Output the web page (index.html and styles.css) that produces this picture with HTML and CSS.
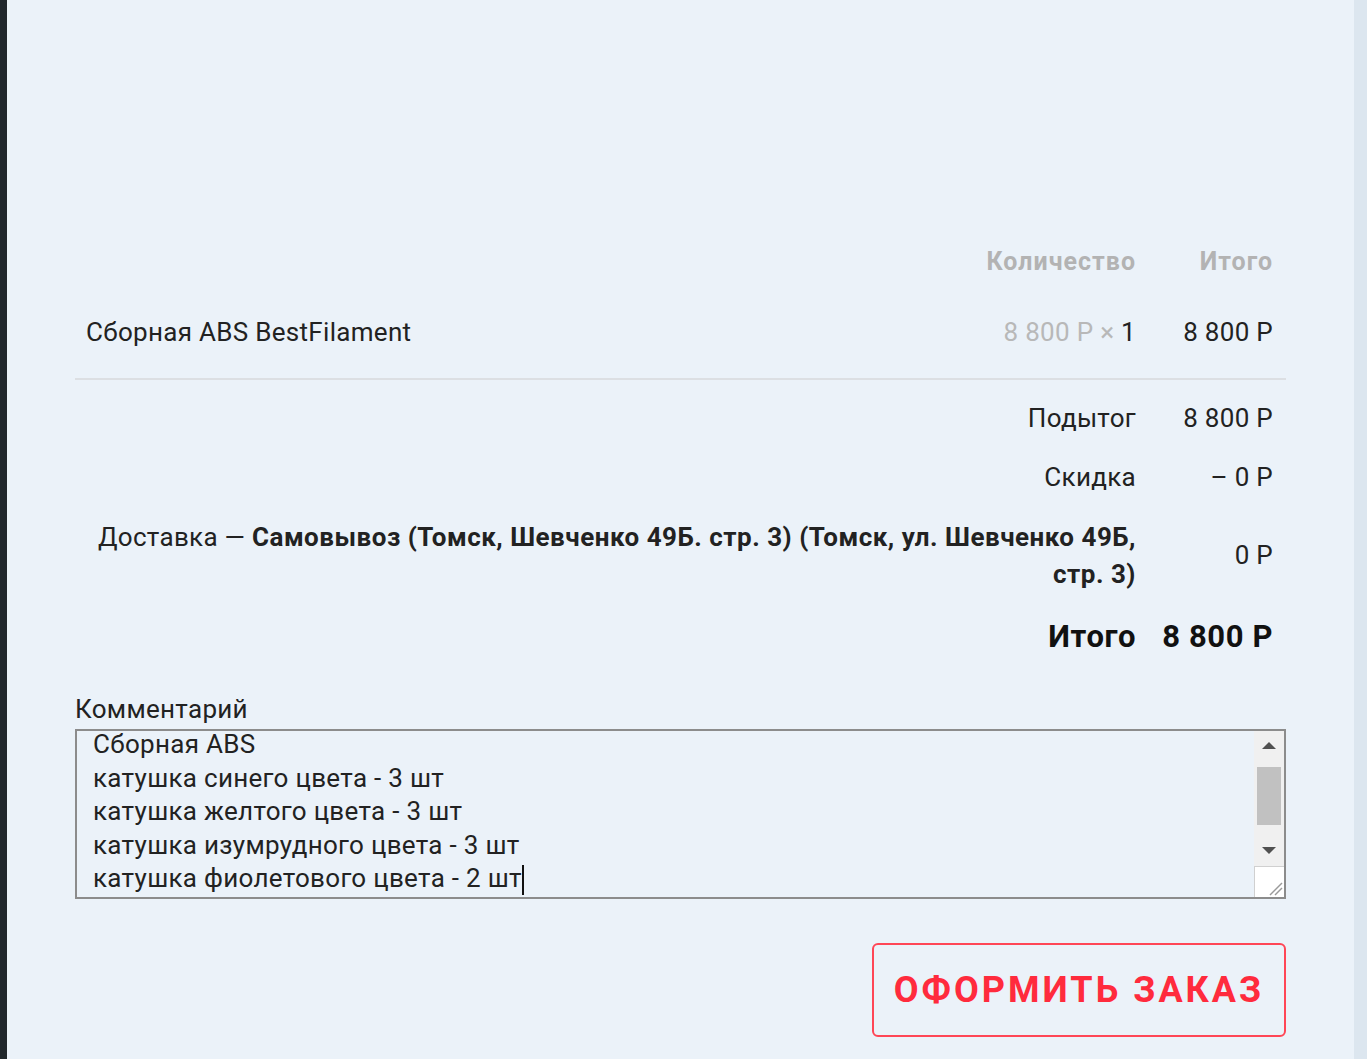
FILE: index.html
```html
<!DOCTYPE html>
<html lang="ru">
<head>
    <meta charset="UTF-8">
    <title>Корзина</title>
    <link rel="stylesheet" href="styles.css">
</head>
<body>
    <div class="pagina">
        <div class="rand-links"></div>

        <div class="inhoud">
            <table class="bestelling">
                <thead>
                    <tr>
                        <th class="kol-naam"></th>
                        <th class="kol-aantal">Количество</th>
                        <th class="kol-totaal">Итого</th>
                    </tr>
                </thead>
                <tbody>
                    <tr class="product">
                        <td class="naam">Сборная ABS BestFilament</td>
                        <td class="rechts"><span class="grijs">8 800 Р ×</span> 1</td>
                        <td class="rechts">8 800 Р</td>
                    </tr>
                </tbody>
                <tfoot>
                    <tr class="eerste">
                        <td colspan="2" class="rechts">Подытог</td>
                        <td class="rechts">8 800 Р</td>
                    </tr>
                    <tr>
                        <td colspan="2" class="rechts">Скидка</td>
                        <td class="rechts">– 0 Р</td>
                    </tr>
                    <tr>
                        <td colspan="2" class="rechts">Доставка — <b>Самовывоз (Томск, Шевченко 49Б. стр. 3) (Томск, ул. Шевченко 49Б, стр. 3)</b></td>
                        <td class="rechts">0 Р</td>
                    </tr>
                    <tr class="eindtotaal">
                        <td colspan="2" class="rechts">Итого</td>
                        <td class="rechts">8 800 Р</td>
                    </tr>
                </tfoot>
            </table>

            <div class="opmerking">
                <label class="opmerking-label">Комментарий</label>
                <div class="opmerking-veld">
                    <div class="opmerking-tekst">
                        <div>Сборная ABS</div>
                        <div>катушка синего цвета - 3 шт</div>
                        <div>катушка желтого цвета - 3 шт</div>
                        <div>катушка изумрудного цвета - 3 шт</div>
                        <div>катушка фиолетового цвета - 2 шт<span class="cursor"></span></div>
                    </div>
                    <div class="schuifbalk">
                        <div class="pijl pijl-op"></div>
                        <div class="spoor"><div class="duim"></div></div>
                        <div class="pijl pijl-neer"></div>
                        <div class="greep">
                            <svg width="22" height="22" viewBox="0 0 22 22">
                                <line x1="8" y1="20" x2="20" y2="8" stroke="#9a9a9a" stroke-width="1.5"/>
                                <line x1="13" y1="20" x2="20" y2="13" stroke="#9a9a9a" stroke-width="1.5"/>
                            </svg>
                        </div>
                    </div>
                </div>
            </div>

            <div class="knoppen">
                <button class="bestel-knop">Оформить заказ</button>
            </div>
        </div>

        <div class="rand-rechts"></div>
    </div>
</body>
</html>
```

FILE: styles.css
```css
body {
    margin: 0;
    font-family: Roboto, "Liberation Sans", sans-serif;
    background-color: #ebf2f9;
    color: #222;
}

.pagina {
    display: flex;
    min-height: 1059px;
}

.rand-links {
    width: 7px;
    background-color: #20272c;
}

.rand-rechts {
    width: 13px;
    background-color: #dce6ef;
}

.inhoud {
    flex: 1;
    padding: 236px 68px 0 68px;
}

.bestelling {
    width: 100%;
    border-collapse: collapse;
    font-size: 26px;
    letter-spacing: 0.3px;
}

.bestelling b {
    letter-spacing: 0.5px;
}

.bestelling th {
    font-size: 25px;
    font-weight: bold;
    letter-spacing: 1px;
    color: #b3b3b3;
    text-align: right;
    line-height: 28px;
    padding: 12px 13px;
}

.kol-totaal {
    width: 111px;
}

.bestelling td {
    line-height: 37.5px;
    padding: 11px 13px;
}

.product td {
    padding: 26px 13px;
    border-bottom: 2px solid #dcdfe3;
}

.product .naam {
    padding-left: 11px;
}

.eerste td {
    padding-top: 20px;
}

.rechts {
    text-align: right;
}

.grijs {
    color: #b8b8b8;
}

.eindtotaal td {
    font-size: 31px;
    font-weight: bold;
    letter-spacing: 0.6px;
    color: #111;
    line-height: 45px;
    padding-top: 9px;
}

.opmerking {
    margin-top: 24px;
}

.opmerking-label {
    display: block;
    font-size: 26px;
    letter-spacing: 0.3px;
    line-height: 30px;
    margin-bottom: 5px;
}

.opmerking-veld {
    display: flex;
    height: 166px;
    border: 2px solid #8c8c8c;
}

.opmerking-tekst {
    flex: 1;
    display: flex;
    flex-direction: column;
    justify-content: flex-end;
    overflow: hidden;
    padding: 0 16px 1px 16px;
    font-size: 26px;
    letter-spacing: 0.3px;
    line-height: 33.5px;
}

.cursor {
    display: inline-block;
    width: 2px;
    height: 30px;
    background-color: #111;
    vertical-align: middle;
}

.schuifbalk {
    width: 30px;
    display: flex;
    flex-direction: column;
    background-color: #f0f0f0;
}

.pijl {
    height: 30px;
    display: flex;
    align-items: center;
    justify-content: center;
}

.pijl::before {
    content: "";
    border-left: 7px solid transparent;
    border-right: 7px solid transparent;
}

.pijl-op::before {
    border-bottom: 7px solid #505050;
}

.pijl-neer::before {
    border-top: 7px solid #505050;
}

.spoor {
    flex: 1;
    padding: 6px 3px;
}

.duim {
    height: 58px;
    background-color: #c1c1c1;
}

.greep {
    height: 30px;
    background-color: #fff;
    border-top: 1px solid #d0d0d0;
    border-left: 1px solid #d0d0d0;
    display: flex;
    align-items: flex-end;
    justify-content: flex-end;
}

.knoppen {
    display: flex;
    justify-content: flex-end;
    margin-top: 44px;
}

.bestel-knop {
    font-family: Roboto, "Liberation Sans", sans-serif;
    font-size: 36px;
    font-weight: bold;
    letter-spacing: 3px;
    text-transform: uppercase;
    color: #ff2b3d;
    background: transparent;
    border: 2px solid #ff4656;
    border-radius: 6px;
    width: 414px;
    height: 94px;
    cursor: pointer;
}
```
